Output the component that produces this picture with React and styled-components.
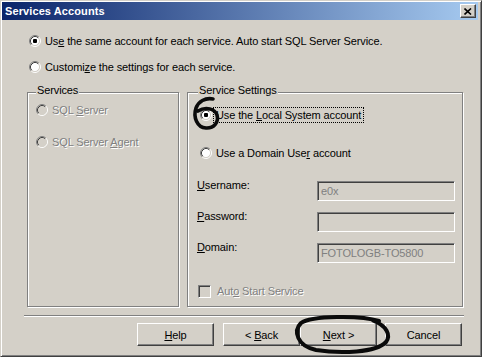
import styled, { createGlobalStyle } from "styled-components";

const GlobalStyle = createGlobalStyle`
  html, body {
    margin: 0;
    padding: 0;
    background: #d4d0c8;
  }
  body {
    font-family: "Liberation Sans", Arial, sans-serif;
    font-size: 11px;
    letter-spacing: -0.12px;
    color: #000;
  }
`;

function RadioIcon({ checked, disabled }) {
  return (
    <svg width="12" height="12" viewBox="0 0 12 12">
      <circle cx="6" cy="6" r="4.5" fill={disabled ? "#d4d0c8" : "#fff"} />
      <path d="M2.11 9.89 A5.5 5.5 0 0 1 9.89 2.11" fill="none" stroke="#808080" />
      <path d="M9.89 2.11 A5.5 5.5 0 0 1 2.11 9.89" fill="none" stroke="#fff" />
      <path d="M2.82 9.18 A4.5 4.5 0 0 1 9.18 2.82" fill="none" stroke="#404040" />
      <path d="M9.18 2.82 A4.5 4.5 0 0 1 2.82 9.18" fill="none" stroke="#d4d0c8" />
      {checked && <rect x="4" y="4" width="4" height="4" rx="1" fill="#000" />}
    </svg>
  );
}

function Radio({ checked, disabled, focused, children, ...rest }) {
  return (
    <RadioRow {...rest}>
      <RadioIcon checked={checked} disabled={disabled} />
      <Caption $disabled={disabled} $focused={focused}>
        {children}
      </Caption>
    </RadioRow>
  );
}

export default function App() {
  return (
    <>
      <GlobalStyle />
      <Window>
        <TitleBar>
          <Title>Services Accounts</Title>
          <CloseButton>
            <svg width="8" height="7" viewBox="0 0 8 7">
              <path d="M0.5 0.5 L7 6.5 M7 0.5 L0.5 6.5" stroke="#000" strokeWidth="1.6" />
            </svg>
          </CloseButton>
        </TitleBar>

        <Body>
          <Options>
            <Radio checked>
              Us<u>e</u> the same account for each service. Auto start SQL Server Service.
            </Radio>
            <Radio>
              Customi<u>z</u>e the settings for each service.
            </Radio>
          </Options>

          <Groups>
            <Group $width={152} $pad="9px 0 0 8px" $gap={16}>
              <GroupLabel $left={8}>Services</GroupLabel>
              <Radio disabled>
                SQL <u>S</u>erver
              </Radio>
              <Radio disabled>
                SQL Server <u>A</u>gent
              </Radio>
            </Group>

            <Group $width={276} $pad="14px 0 0 0" $gap={0}>
              <GroupLabel $left={10}>Service Settings</GroupLabel>
              <Radio checked focused className="indent">
                Use the <u>L</u>ocal System account
              </Radio>
              <Radio className="indent second">
                Use a Domain Use<u>r</u> account
              </Radio>

              <FieldRow $top={20}>
                <FieldLabel>
                  <u>U</u>sername:
                </FieldLabel>
                <Input>e0x</Input>
              </FieldRow>
              <FieldRow $top={11}>
                <FieldLabel>
                  <u>P</u>assword:
                </FieldLabel>
                <Input />
              </FieldRow>
              <FieldRow $top={11}>
                <FieldLabel>
                  <u>D</u>omain:
                </FieldLabel>
                <Input>FOTOLOGB-TO5800</Input>
              </FieldRow>

              <CheckRow>
                <CheckBox />
                <DisabledText>
                  Aut<u>o</u> Start Service
                </DisabledText>
              </CheckRow>
            </Group>
          </Groups>

          <Separator />

          <ButtonBar>
            <Button>
              <u>H</u>elp
            </Button>
            <Button $gap={9}>
              &lt;&nbsp;<u>B</u>ack
            </Button>
            <Button>
              <u>N</u>ext&nbsp;&gt;
            </Button>
            <Button $gap={8}>Cancel</Button>
          </ButtonBar>
        </Body>

        <Marks width="482" height="357" viewBox="0 0 482 357">
          <path
            d="M212 98 C204 96.5, 197.5 100.5, 195 107 C192 116, 196 126.5, 205 127 C213 127.5, 218 121, 216 114 C214 108, 205 105, 197 110"
            fill="none"
            stroke="#0a0a0a"
            strokeWidth="3.6"
            strokeLinecap="round"
          />
          <path
            d="M378 320 C360 314, 310 314.5, 300 322 C292 330, 296 345, 315 349 C340 353, 375 351.5, 385 341 C390 334, 386 325, 372 319.5"
            fill="none"
            stroke="#0a0a0a"
            strokeWidth="4"
            strokeLinecap="round"
          />
        </Marks>
      </Window>
    </>
  );
}

const Window = styled.div`
  position: relative;
  box-sizing: border-box;
  width: 482px;
  height: 357px;
  overflow: hidden;
  background: #d4d0c8;
  border: 1px solid;
  border-color: #d4d0c8 #404040 #404040 #d4d0c8;
  box-shadow: inset 1px 1px 0 #fff, inset -1px -1px 0 #808080;
  padding: 1px 3px 0 1px;
  display: flex;
  flex-direction: column;
`;

const TitleBar = styled.div`
  height: 18px;
  flex: none;
  display: flex;
  align-items: center;
  justify-content: space-between;
  padding: 0 2px 0 3px;
  background: linear-gradient(to right, #0a246a, #a6caf0);
`;

const Title = styled.span`
  color: #fff;
  font-weight: bold;
  font-size: 11px;
  letter-spacing: 0.1px;
`;

const CloseButton = styled.div`
  box-sizing: border-box;
  width: 16px;
  height: 14px;
  display: flex;
  align-items: center;
  justify-content: center;
  background: #d4d0c8;
  border: 1px solid;
  border-color: #fff #404040 #404040 #fff;
  box-shadow: inset -1px -1px 0 #808080;
`;

const Body = styled.div`
  display: flex;
  flex-direction: column;
  padding-top: 13px;
`;

const Options = styled.div`
  display: flex;
  flex-direction: column;
  gap: 10px;
  margin-left: 27px;
`;

const RadioRow = styled.div`
  display: flex;
  align-items: center;
  height: 16px;
  gap: 1px;

  &.indent {
    margin-left: 12px;
  }
  &.second {
    margin-top: 22px;
  }
`;

const Caption = styled.span`
  box-sizing: border-box;
  height: 16px;
  line-height: 14px;
  padding: 0 2px;
  border: 1px ${(p) => (p.$focused ? "dotted #000" : "solid transparent")};
  white-space: nowrap;
  color: ${(p) => (p.$disabled ? "#808080" : "#000")};
  text-shadow: ${(p) => (p.$disabled ? "1px 1px 0 #fff" : "none")};
`;

const Groups = styled.div`
  display: flex;
  gap: 8px;
  margin: 17px 0 0 25px;
`;

const Group = styled.div`
  position: relative;
  box-sizing: border-box;
  width: ${(p) => p.$width}px;
  height: 215px;
  border: 1px solid #808080;
  box-shadow: inset 1px 1px 0 #fff, 1px 1px 0 #fff;
  padding: ${(p) => p.$pad};
  display: flex;
  flex-direction: column;
  gap: ${(p) => p.$gap}px;
`;

const GroupLabel = styled.span`
  position: absolute;
  top: -9px;
  left: ${(p) => p.$left}px;
  padding: 0 1px;
  line-height: 13px;
  background: #d4d0c8;
`;

const FieldRow = styled.div`
  display: flex;
  align-items: flex-start;
  margin: ${(p) => p.$top}px 0 0 9px;
`;

const FieldLabel = styled.span`
  width: 120px;
  margin-top: -2px;
  line-height: 13px;
`;

const Input = styled.div`
  box-sizing: border-box;
  width: 138px;
  height: 20px;
  padding: 0 3px;
  display: flex;
  align-items: center;
  color: #808080;
  background: #d4d0c8;
  border: 1px solid;
  border-color: #808080 #fff #fff #808080;
  box-shadow: inset 1px 1px 0 #404040, inset -1px -1px 0 #d4d0c8;
`;

const CheckRow = styled.div`
  display: flex;
  align-items: center;
  gap: 6px;
  height: 16px;
  margin: 20px 0 0 10px;
`;

const CheckBox = styled.span`
  box-sizing: border-box;
  width: 13px;
  height: 13px;
  background: #d4d0c8;
  border: 1px solid;
  border-color: #808080 #fff #fff #808080;
  box-shadow: inset 1px 1px 0 #404040, inset -1px -1px 0 #d4d0c8;
`;

const DisabledText = styled.span`
  color: #808080;
  text-shadow: 1px 1px 0 #fff;
`;

const Separator = styled.div`
  width: 440px;
  height: 0;
  margin: 8px 0 0 22px;
  border-top: 1px solid #808080;
  border-bottom: 1px solid #fff;
`;

const ButtonBar = styled.div`
  display: flex;
  margin: 6px 0 0 135px;
`;

const Button = styled.div`
  box-sizing: border-box;
  width: 77px;
  height: 23px;
  margin-left: ${(p) => p.$gap || 0}px;
  display: flex;
  align-items: center;
  justify-content: center;
  background: #d4d0c8;
  border: 1px solid;
  border-color: #fff #404040 #404040 #fff;
  box-shadow: inset -1px -1px 0 #808080;

  &:first-child {
    margin-left: 0;
  }
`;

const Marks = styled.svg`
  position: absolute;
  left: 0;
  top: 0;
  pointer-events: none;
`;
